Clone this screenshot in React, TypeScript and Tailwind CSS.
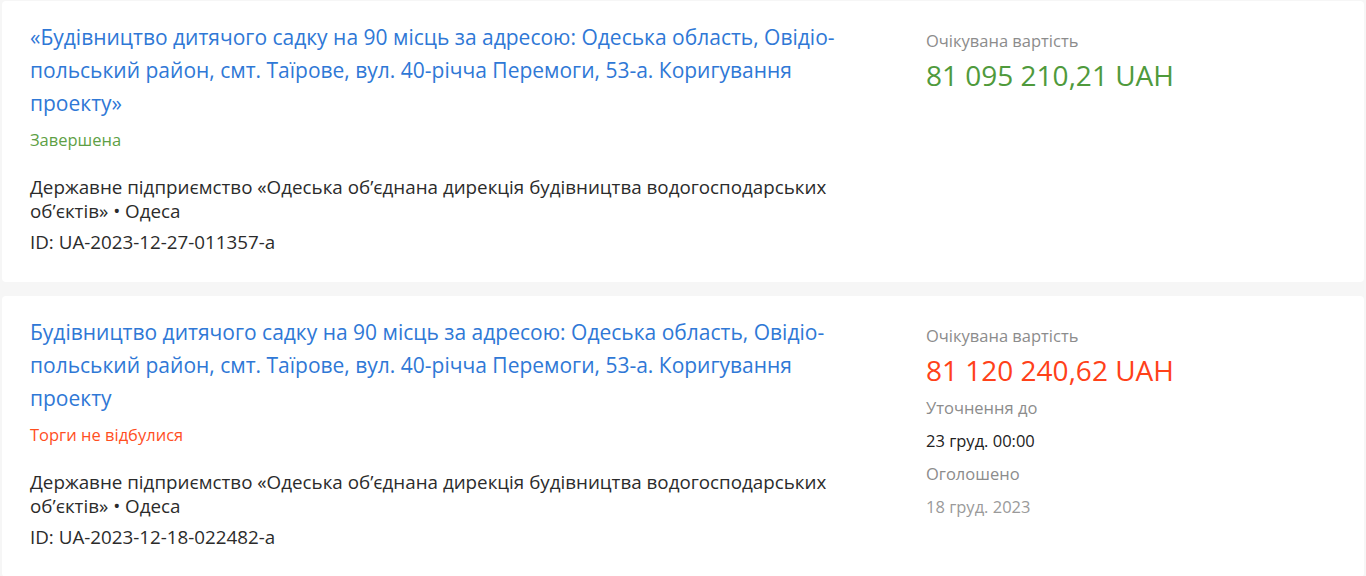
const tenders = [
  {
    title:
      '«Будівництво дитячого садку на 90 місць за адресою: Одеська область, Овідіо-польський район, смт. Таїрове, вул. 40-річча Перемоги, 53-а. Коригування проекту»',
    status: 'Завершена',
    statusClass: 'text-[#5e9f45]',
    org: 'Державне підприємство «Одеська об’єднана дирекція будівництва водогосподарських об’єктів» • Одеса',
    id: 'ID: UA-2023-12-27-011357-a',
    price: '81 095 210,21 UAH',
    priceClass: 'text-[#4f9a3c]',
    extra: null as null | { until: string; announced: string },
  },
  {
    title:
      'Будівництво дитячого садку на 90 місць за адресою: Одеська область, Овідіо-польський район, смт. Таїрове, вул. 40-річча Перемоги, 53-а. Коригування проекту',
    status: 'Торги не відбулися',
    statusClass: 'text-[#ff4f1f]',
    org: 'Державне підприємство «Одеська об’єднана дирекція будівництва водогосподарських об’єктів» • Одеса',
    id: 'ID: UA-2023-12-18-022482-a',
    price: '81 120 240,62 UAH',
    priceClass: 'text-[#ff4119]',
    extra: { until: '23 груд. 00:00', announced: '18 груд. 2023' },
  },
]

type Tender = (typeof tenders)[number]

function TenderCard({ t }: { t: Tender }) {
  return (
    <div className="flex rounded-[4px] bg-white px-[28px] pt-[20px] pb-[28px]">
      <div className="w-[896px] shrink-0">
        <a className="block max-w-[828px] text-[21px] leading-[33px] text-[#2f78d6]">{t.title}</a>
        <p className={`mt-[8px] text-[16.5px] leading-[24px] ${t.statusClass}`}>{t.status}</p>
        <p className="mt-[23px] max-w-[828px] text-[18.8px] leading-[24px] text-[#2b2b2b]">{t.org}</p>
        <p className="mt-[7px] text-[18.8px] leading-[24px] text-[#2b2b2b]">{t.id}</p>
      </div>
      <div className="pt-[8px]">
        <p className="text-[16.5px] leading-[24px] text-[#8c8c8c]">Очікувана вартість</p>
        <p className={`mt-[5px] text-[28px] leading-[34px] ${t.priceClass}`}>{t.price}</p>
        {t.extra && (
          <div className="mt-[9px] flex flex-col gap-[9px] text-[16.5px] leading-[24px]">
            <p className="text-[#8c8c8c]">Уточнення до</p>
            <p className="text-[#222]">{t.extra.until}</p>
            <p className="text-[#8c8c8c]">Оголошено</p>
            <p className="text-[#9a9a9a]">{t.extra.announced}</p>
          </div>
        )}
      </div>
    </div>
  )
}

export default function App() {
  return (
    <div
      className="min-h-screen bg-[#f6f6f6] px-[2px] pt-px"
      style={{ fontFamily: '"Open Sans", sans-serif' }}
    >
      <div className="flex flex-col gap-[14px]">
        {tenders.map((t) => (
          <TenderCard key={t.id} t={t} />
        ))}
      </div>
    </div>
  )
}
